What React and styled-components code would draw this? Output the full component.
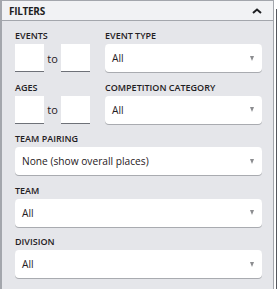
import React from 'react';
import styled, { createGlobalStyle } from 'styled-components';

const GlobalStyle = createGlobalStyle`
  html, body {
    margin: 0;
    padding: 0;
    background: #ffffff;
    font-family: "Open Sans", "Noto Sans", sans-serif;
  }
`;

const Page = styled.div`
  display: flex;
  width: 278px;
  height: 289px;
  overflow: hidden;
`;

const Panel = styled.div`
  width: 274px;
  box-sizing: border-box;
  border-left: 2px solid #a3a6ac;
  border-right: 1px solid #a3a6ac;
  border-top: 1px solid #a3a6ac;
  background: #e5e6ea;
  display: flex;
  flex-direction: column;
`;

const Splitter = styled.div`
  width: 1px;
  margin-left: 2px;
  margin-top: 9px;
  background: #55585e;
`;

const Header = styled.div`
  height: 19px;
  display: flex;
  align-items: center;
  justify-content: space-between;
  padding: 0 11px 0 7px;
  background: #f1f2f4;
  border-bottom: 1px solid #a3a6ac;
`;

const Title = styled.span`
  font-size: 10px;
  font-weight: 700;
  letter-spacing: -0.3px;
  color: #1e1f22;
`;

const Body = styled.div`
  padding: 9px 11px 0 13px;
  display: flex;
  flex-direction: column;
  gap: 9.5px;
`;

const Row = styled.div`
  display: grid;
  grid-template-columns: 75px 1fr;
  column-gap: 15px;
`;

const Field = styled.div`
  display: flex;
  flex-direction: column;
`;

const Label = styled.div`
  font-size: 9px;
  line-height: 12px;
  font-weight: 600;
  color: #1f2023;
  margin-bottom: 2px;
  white-space: nowrap;
`;

const Range = styled.div`
  display: flex;
  align-items: center;
  justify-content: space-between;
`;

const Box = styled.div`
  width: 29px;
  height: 28px;
  box-sizing: border-box;
  background: #ffffff;
  border-bottom: 1px solid #6e7178;
`;

const To = styled.span`
  font-size: 11px;
  color: #1f2023;
`;

const Select = styled.div`
  height: 28px;
  box-sizing: border-box;
  display: flex;
  align-items: center;
  justify-content: space-between;
  padding: 0 8px 0 7px;
  background: #ffffff;
  border-radius: 4px;
  box-shadow: 0 1px 0 #a9abb0;
  font-size: 10.2px;
  color: #1f2023;
`;

const Arrow = styled.span`
  width: 0;
  height: 0;
  border-left: 2.5px solid transparent;
  border-right: 2.5px solid transparent;
  border-top: 5px solid #8c8d90;
`;

function Dropdown({ value }) {
  return (
    <Select>
      <span>{value}</span>
      <Arrow />
    </Select>
  );
}

function RangeField({ label }) {
  return (
    <Field>
      <Label>{label}</Label>
      <Range>
        <Box />
        <To>to</To>
        <Box />
      </Range>
    </Field>
  );
}

function SelectField({ label, value }) {
  return (
    <Field>
      <Label>{label}</Label>
      <Dropdown value={value} />
    </Field>
  );
}

export default function App() {
  return (
    <Page>
      <GlobalStyle />
      <Panel>
        <Header>
          <Title>FILTERS</Title>
          <svg width="10" height="6" viewBox="0 0 10 6">
            <polyline points="1,5 5,1.5 9,5" fill="none" stroke="#1e1f22" strokeWidth="2" />
          </svg>
        </Header>
        <Body>
          <Row>
            <RangeField label="EVENTS" />
            <SelectField label="EVENT TYPE" value="All" />
          </Row>
          <Row>
            <RangeField label="AGES" />
            <SelectField label="COMPETITION CATEGORY" value="All" />
          </Row>
          <SelectField label="TEAM PAIRING" value="None (show overall places)" />
          <SelectField label="TEAM" value="All" />
          <SelectField label="DIVISION" value="All" />
        </Body>
      </Panel>
      <Splitter />
    </Page>
  );
}
